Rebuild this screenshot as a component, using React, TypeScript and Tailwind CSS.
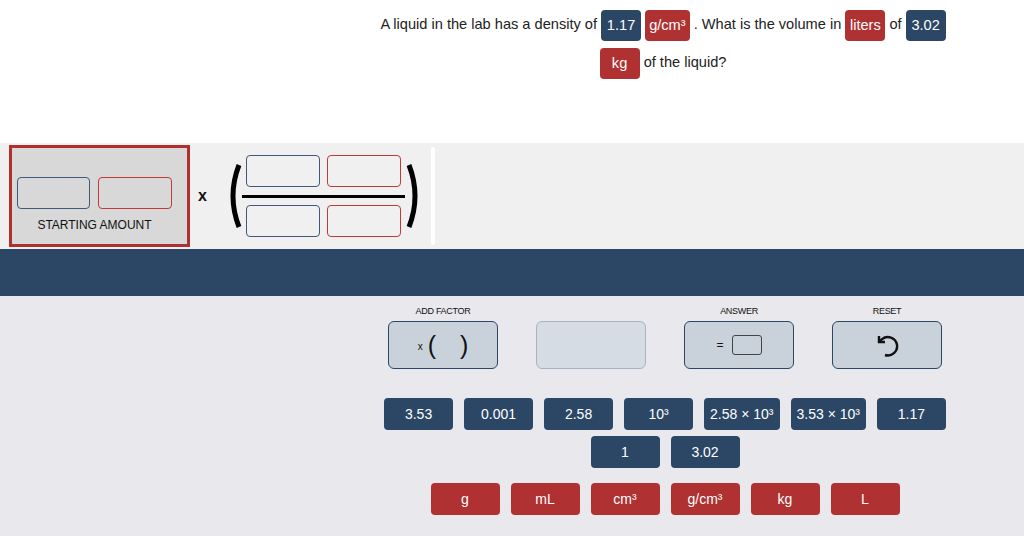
import React from "react";

function QChip({ children, red }: { children: React.ReactNode; red?: boolean }) {
  return (
    <span
      className={`inline-block h-[31px] leading-[31px] min-w-[40px] px-[4px] rounded-[4px] text-white text-center align-middle ${
        red ? "bg-[#af3131]" : "bg-[#2c4665]"
      }`}
    >
      {children}
    </span>
  );
}

function Chip({ children, red }: { children: React.ReactNode; red?: boolean }) {
  return (
    <div
      className={`h-[32px] min-w-[69px] px-[6px] rounded-[4px] flex items-center justify-center text-white text-[14px] whitespace-nowrap ${
        red ? "bg-[#af3131]" : "bg-[#2c4665]"
      }`}
    >
      {children}
    </div>
  );
}

function Box({ red, w }: { red?: boolean; w: string }) {
  return (
    <div
      className={`${w} h-[32px] rounded-[4px] border ${
        red ? "border-[#c03a3a]" : "border-[#3d5a7a]"
      }`}
    />
  );
}

function Paren({ right }: { right?: boolean }) {
  return (
    <svg width="16" height="66" viewBox="0 0 16 66" className="block">
      {right ? (
        <path d="M3 2 Q15 33 3 64" stroke="#000" strokeWidth="5" fill="none" />
      ) : (
        <path d="M13 2 Q1 33 13 64" stroke="#000" strokeWidth="5" fill="none" />
      )}
    </svg>
  );
}

export default function App() {
  return (
    <div className="w-[1024px] h-[536px] overflow-hidden font-['Liberation_Sans',Arial,sans-serif] text-[#222]">
      {/* Question */}
      <div className="h-[143px] bg-white pl-[302px]">
        <div className="w-[590px] mx-auto text-center text-[14.6px] leading-[38px] pt-[5px]">
          A liquid in the lab has a density of <QChip>1.17</QChip> <QChip red>g/cm³</QChip> . What is
          the volume in <QChip red>liters</QChip> of <QChip>3.02</QChip> <QChip red>kg</QChip> of the
          liquid?
        </div>
      </div>

      {/* Workspace band */}
      <div className="h-[106px] bg-[#f0f0f0] flex items-center">
        <div className="ml-[9px] w-[181px] h-[102px] border-[3px] border-[#b03030] bg-[#d8d8d8] pl-[5px] pt-[29px]">
          <div className="w-[155px] flex flex-col items-center">
            <div className="flex gap-[8px]">
              <Box w="w-[73px]" />
              <Box red w="w-[74px]" />
            </div>
            <div className="mt-[8px] text-[12px] leading-[16px] text-[#111]">STARTING AMOUNT</div>
          </div>
        </div>
        <div className="ml-[8px] text-[16px] font-bold leading-none text-[#111]">x</div>
        <div className="ml-[19px] flex items-center">
          <Paren />
          <div className="ml-[4px] flex flex-col">
            <div className="flex gap-[7px]">
              <Box w="w-[74px]" />
              <Box red w="w-[74px]" />
            </div>
            <div className="h-[3px] bg-black -mx-[4px] mt-[8px] mb-[7px]" />
            <div className="flex gap-[7px]">
              <Box w="w-[74px]" />
              <Box red w="w-[74px]" />
            </div>
          </div>
          <div className="ml-[5px]">
            <Paren right />
          </div>
        </div>
        <div className="ml-[9px] w-[4px] h-[98px] bg-white rounded-full" />
      </div>

      {/* Dark bar */}
      <div className="h-[47px] bg-[#2c4665]" />

      {/* Controls */}
      <div className="h-[240px] bg-[#e9e8ed] flex">
        <div className="w-[306px] shrink-0" />
        <div className="flex-1 flex flex-col items-center">
          <div className="flex gap-[38px] mt-[8px]">
            <div className="flex flex-col items-center">
              <div className="h-[14px] leading-[14px] text-[9px] tracking-[-0.3px] text-[#111]">ADD FACTOR</div>
              <div className="mt-[3px] w-[110px] h-[48px] rounded-[6px] bg-[#c9d1da] border border-[#2c4665] flex items-center justify-center">
                <span className="text-[10px] text-[#111] mr-[5px] mt-[2px]">x</span>
                <span className="text-[25px] leading-none text-[#111]">(</span>
                <span className="w-[24px]" />
                <span className="text-[25px] leading-none text-[#111]">)</span>
              </div>
            </div>
            <div className="flex flex-col items-center">
              <div className="h-[14px]" />
              <div className="mt-[3px] w-[110px] h-[48px] rounded-[6px] bg-[#d6dce4] border border-[#a9b3bf]" />
            </div>
            <div className="flex flex-col items-center">
              <div className="h-[14px] leading-[14px] text-[9px] tracking-[-0.3px] text-[#111]">ANSWER</div>
              <div className="mt-[3px] w-[110px] h-[48px] rounded-[6px] bg-[#c9d1da] border border-[#2c4665] flex items-center justify-center">
                <span className="text-[12px] text-[#111] mr-[8px]">=</span>
                <div className="w-[30px] h-[20px] rounded-[3px] border-[1.5px] border-[#444]" />
              </div>
            </div>
            <div className="flex flex-col items-center">
              <div className="h-[14px] leading-[14px] text-[9px] tracking-[-0.3px] text-[#111]">RESET</div>
              <div className="mt-[3px] w-[110px] h-[48px] rounded-[6px] bg-[#c9d1da] border border-[#2c4665] flex items-center justify-center">
                <svg width="24" height="24" viewBox="0 0 24 24" fill="none" stroke="#111" strokeWidth="2.4" className="ml-[2px]">
                  <path d="M3 3v6h6" strokeLinejoin="miter" />
                  <path d="M3.5 8.5 L6 6.2 A9.2 9.2 0 1 1 9 22" />
                </svg>
              </div>
            </div>
          </div>

          <div className="mt-[29px] w-[600px] flex flex-wrap justify-center gap-x-[11px] gap-y-[6px]">
            <Chip>3.53</Chip>
            <Chip>0.001</Chip>
            <Chip>2.58</Chip>
            <Chip>10³</Chip>
            <Chip>2.58 × 10³</Chip>
            <Chip>3.53 × 10³</Chip>
            <Chip>1.17</Chip>
            <Chip>1</Chip>
            <Chip>3.02</Chip>
          </div>

          <div className="mt-[15px] flex gap-[11px]">
            <Chip red>g</Chip>
            <Chip red>mL</Chip>
            <Chip red>cm³</Chip>
            <Chip red>g/cm³</Chip>
            <Chip red>kg</Chip>
            <Chip red>L</Chip>
          </div>
        </div>
      </div>
    </div>
  );
}
